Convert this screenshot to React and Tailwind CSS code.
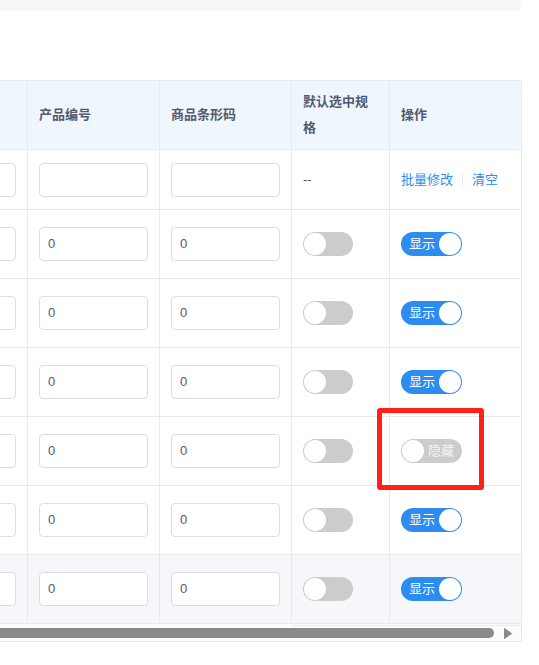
import React from "react";

const font = "[font-family:'Liberation_Sans','Noto_Sans_CJK_SC',sans-serif]";

// rows below the header: "show" toggles state
const rows = [true, true, true, false, true, true];

const Input = ({ value }) => (
  <div className="h-[34px] w-[109px] shrink-0 rounded-[4px] border border-[#dcdee2] bg-white px-[8px] flex items-center text-[13px] text-[#515a6e]">
    {value}
  </div>
);

const Off = () => (
  <div className="relative h-[24px] w-[50px] rounded-full bg-[#cccccc]">
    <span className="absolute left-[1px] top-[1px] h-[22px] w-[22px] rounded-full bg-white" />
  </div>
);

const ShowSwitch = ({ on }) =>
  on ? (
    <div className="relative h-[24px] w-[61px] rounded-full bg-[#2d8cf0]">
      <span className="absolute left-[8px] top-0 leading-[24px] text-[13px] text-white">显示</span>
      <span className="absolute right-[1px] top-[1px] h-[22px] w-[22px] rounded-full bg-white" />
    </div>
  ) : (
    <div className="relative h-[24px] w-[61px] rounded-full bg-[#cccccc]">
      <span className="absolute left-[1px] top-[1px] h-[22px] w-[22px] rounded-full bg-white" />
      <span className="absolute left-[27px] top-0 leading-[24px] text-[13px] text-[#f4f4f4]">隐藏</span>
    </div>
  );

const cell = "border-r border-[#e8eaec] flex items-center px-[11px]";
const firstCell = "border-r border-[#e8eaec] flex items-center justify-end overflow-hidden pr-[11px]";

export default function App() {
  return (
    <div className={`relative w-[539px] h-[665px] overflow-hidden bg-white ${font}`}>
      {/* top card edge */}
      <div className="h-[11px] w-[522px] rounded-br-[6px] bg-[#f8f8f9]" />

      {/* table */}
      <div className="mt-[69px] w-[522px] border-t border-r border-b border-[#e8eaec]">
        {/* header */}
        <div className="grid grid-cols-[28px_132px_132px_98px_131px] h-[69px] border-b border-[#e8eaec] bg-[#f0f6fe] text-[13px] font-bold text-[#515a6e]">
          <div className="border-r border-[#e8eaec]" />
          <div className={cell}>产品编号</div>
          <div className={cell}>商品条形码</div>
          <div className={`${cell} leading-[26px]`}>默认选中规格</div>
          <div className="flex items-center px-[11px]">操作</div>
        </div>

        {/* batch row */}
        <div className="grid grid-cols-[28px_132px_132px_98px_131px] h-[60px] border-b border-[#e8eaec]">
          <div className={firstCell}>
            <Input value="" />
          </div>
          <div className={cell}>
            <Input value="" />
          </div>
          <div className={cell}>
            <Input value="" />
          </div>
          <div className={`${cell} text-[13px] text-[#555555]`}>--</div>
          <div className="flex items-center px-[11px] text-[13px] text-[#2d8cf0]">
            <span>批量修改</span>
            <span className="mx-[9px] h-[13px] w-px bg-[#e8eaec]" />
            <span>清空</span>
          </div>
        </div>

        {rows.map((on, i) => (
          <div
            key={i}
            className={`grid grid-cols-[28px_132px_132px_98px_131px] h-[69px] border-b border-[#e8eaec] ${
              i === rows.length - 1 ? "bg-[#f5f7fa]" : ""
            }`}
          >
            {/* first column is scrolled out of view, its value is off-screen */}
            <div className={firstCell}>
              <Input value="" />
            </div>
            <div className={cell}>
              <Input value="0" />
            </div>
            <div className={cell}>
              <Input value="0" />
            </div>
            <div className={cell}>
              <Off />
            </div>
            <div className="flex items-center px-[11px]">
              <ShowSwitch on={on} />
            </div>
          </div>
        ))}

        {/* horizontal scrollbar */}
        <div className="relative h-[17px] bg-[#fcfcfc]">
          <div className="absolute left-[292px] right-0 top-[1px] h-px bg-[#e8eaec]" />
          <div className="absolute left-0 top-[4px] h-[10px] w-[494px] rounded-r-[5px] bg-[#8a8a8a]" />
          <svg className="absolute left-[504px] top-[4px]" width="8" height="11" viewBox="0 0 8 11">
            <path d="M0.5 0.5 L7.5 5.5 L0.5 10.5 Z" fill="#8a8a8a" stroke="#8a8a8a" strokeLinejoin="round" />
          </svg>
        </div>
      </div>

      {/* highlight box */}
      <div className="absolute left-[377px] top-[408px] h-[82px] w-[107px] rounded-[3px] border-[5px] border-[#ff2017]" />
    </div>
  );
}
